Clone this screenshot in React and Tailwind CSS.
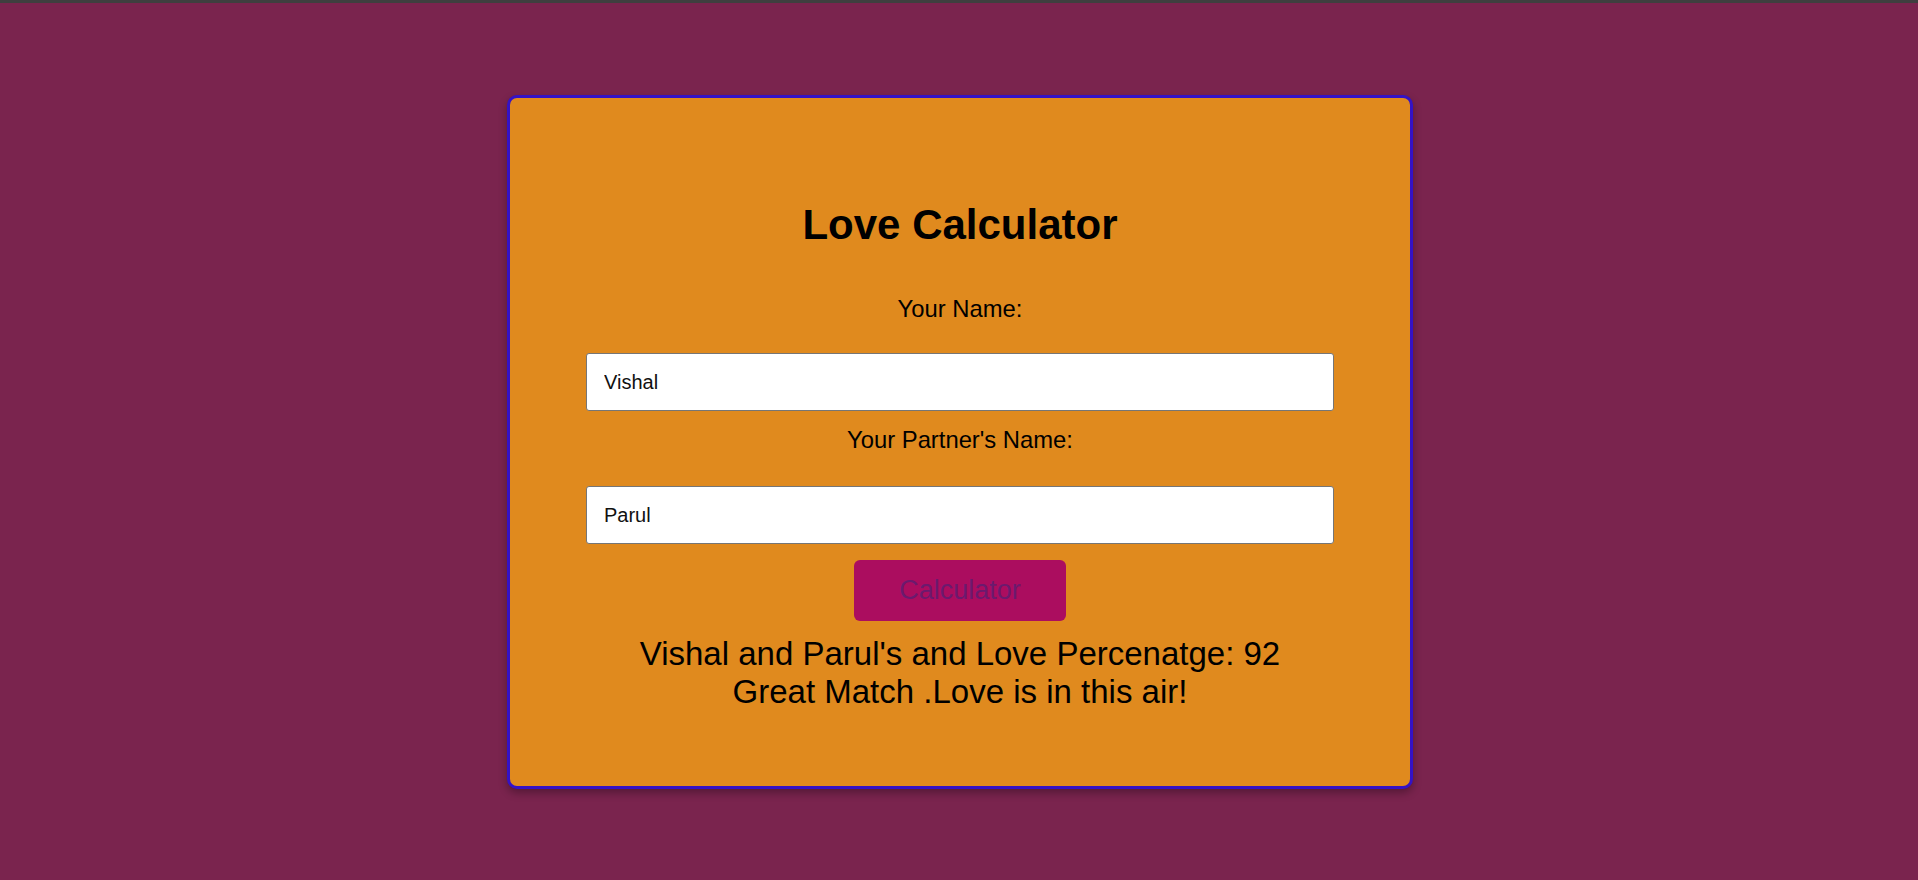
import React, { useState } from "react";

const App = () => {
  const [name, setName] = useState("Vishal");
  const [partner, setPartner] = useState("Parul");

  return (
    <div
      className="min-h-[880px] bg-[#7a244e] flex flex-col items-center"
      style={{ fontFamily: '"Liberation Sans", Arial, sans-serif' }}
    >
      <div className="w-full h-[3px] bg-[#3f3f3f]" />
      <div className="mt-[92px] ml-[2px] w-[906px] h-[694px] rounded-[10px] border-[3px] border-[#3412c6] bg-[#e08a1e] shadow-[0_4px_8px_rgba(0,0,0,0.3)] flex flex-col items-center pt-[103px] text-black">
        <h1 className="text-[42px] font-bold leading-[normal]">Love Calculator</h1>

        <label className="mt-[46px] text-[23.8px] leading-[normal]">Your Name:</label>
        <input
          value={name}
          onChange={(e) => setName(e.target.value)}
          className="mt-[30px] w-[748px] h-[58px] px-[17px] text-[20px] bg-white border border-[#767676] rounded-[3px] text-[#111] outline-none"
        />

        <label className="mt-[15px] text-[23.8px] leading-[normal]">Your Partner's Name:</label>
        <input
          value={partner}
          onChange={(e) => setPartner(e.target.value)}
          className="mt-[32px] w-[748px] h-[58px] px-[17px] text-[20px] bg-white border border-[#767676] rounded-[3px] text-[#111] outline-none"
        />

        <button className="mt-[16px] w-[212px] h-[61px] rounded-[6px] bg-[#ab0d5f] text-[#6b1a6e] text-[27px]">
          Calculator
        </button>

        <div className="mt-[14px] text-[33px] leading-[normal] text-center">
          <div>Vishal and Parul's and Love Percenatge: 92</div>
          <div>Great Match .Love is in this air!</div>
        </div>
      </div>
    </div>
  );
};

export default App;
